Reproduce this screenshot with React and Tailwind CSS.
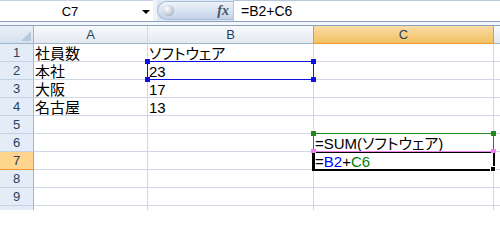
import React from "react";

const F = "font-['Liberation_Sans','Noto_Sans_CJK_JP',sans-serif] [font-feature-settings:'palt']";

const rows = [
  { n: 1, a: "社員数", b: "ソフトウェア", c: null },
  { n: 2, a: "本社", b: "23", c: null },
  { n: 3, a: "大阪", b: "17", c: null },
  { n: 4, a: "名古屋", b: "13", c: null },
  { n: 5, a: "", b: "", c: null },
  { n: 6, a: "", b: "", c: "sum" },
  { n: 7, a: "", b: "", c: "formula" },
  { n: 8, a: "", b: "", c: null },
  { n: 9, a: "", b: "", c: null },
  { n: "", a: "", b: "", c: null },
];

function CellText({ children }) {
  return (
    <div className={`h-[17px] pl-[1px] text-[15px] leading-[20px] whitespace-nowrap text-black ${F}`}>
      {children}
    </div>
  );
}

function RowHead({ n, active }) {
  return active ? (
    <div className="w-[34px] h-[18px] shrink-0 bg-[#ffd58d] border-r border-b border-[#f29536] flex items-center justify-center text-[13px] text-[#27415f] font-['Liberation_Sans',sans-serif]">
      {n}
    </div>
  ) : (
    <div className="w-[34px] h-[18px] shrink-0 bg-[#e4ecf7] border-r border-b border-r-[#9eb6ce] border-b-[#c5d2e3] flex items-center justify-center text-[13px] text-[#27415f] font-['Liberation_Sans',sans-serif]">
      {n}
    </div>
  );
}

export default function App() {
  return (
    <div className="relative w-[500px] h-[210px] overflow-hidden bg-white">
      {/* formula bar */}
      <div className="flex h-[22px] border-b border-[#8ba0bc] bg-[#dfe8f5]">
        <div className="w-[153px] shrink-0 bg-white border-t border-[#c5d2e3] flex items-center relative">
          <div className="w-[140px] text-center text-[13px] text-black font-['Liberation_Sans',sans-serif] leading-none">C7</div>
          <div className="w-0 h-0 border-l-[4px] border-r-[4px] border-t-[4px] border-l-transparent border-r-transparent border-t-black ml-[2px] mt-[1px]" />
        </div>
        <div className="w-[4px] shrink-0 bg-[#eef3fa]" />
        <div className="w-[76px] shrink-0 mt-[1px] mb-[1px] rounded-l-full border border-r-0 border-[#a9bcd6] bg-gradient-to-b from-[#eef3fa] via-[#d9e3f1] to-[#c3d2e8] flex items-center">
          <div className="ml-[5px] w-[11px] h-[11px] rounded-full bg-[radial-gradient(circle_at_35%_35%,#ffffff,#c9ced6_55%,#8d96a3)]" />
          <div className="ml-auto mr-[4px] text-[14px] italic font-bold text-[#4a5566] font-['Liberation_Serif',serif] leading-none">fx</div>
        </div>
        <div className="flex-1 bg-white border-l border-t border-[#b6c5da] flex items-center pl-[7px] text-[14px] text-black font-['Liberation_Sans',sans-serif] leading-none">
          =B2+C6
        </div>
      </div>
      {/* strip */}
      <div className="h-[4px] bg-[#f4f7fb] border-b border-[#8ba0bc]" />
      {/* header row */}
      <div className="flex h-[18px]">
        <div className="w-[34px] shrink-0 bg-gradient-to-b from-[#eaf0f8] to-[#d6e1ef] border-r border-b border-[#9eb6ce] relative">
          <svg className="absolute right-[2px] bottom-[2px]" width="10" height="10" viewBox="0 0 10 10">
            <polygon points="10,0 10,10 0,10" fill="#b7c8de" />
          </svg>
        </div>
        <div className="w-[114px] shrink-0 bg-gradient-to-b from-[#f8f9fb] to-[#e4e9f0] border-r border-b border-r-[#d0d7e5] border-b-[#9eb6ce] flex items-center justify-center text-[13px] text-[#27415f] font-['Liberation_Sans',sans-serif]">A</div>
        <div className="w-[166px] shrink-0 bg-gradient-to-b from-[#f8f9fb] to-[#e4e9f0] border-r border-b border-r-[#d0d7e5] border-b-[#9eb6ce] flex items-center justify-center text-[13px] text-[#27415f] font-['Liberation_Sans',sans-serif]">B</div>
        <div className="w-[181px] shrink-0 -ml-[1px] bg-gradient-to-b from-[#f9dca6] to-[#f1c15f] border border-t-0 border-[#f29536] flex items-center justify-center text-[13px] text-[#27415f] font-['Liberation_Sans',sans-serif]">C</div>
        <div className="flex-1 bg-gradient-to-b from-[#f8f9fb] to-[#e4e9f0] border-b border-[#9eb6ce]" />
      </div>
      {/* data rows */}
      {rows.map((r, i) => (
        <div key={i} className="flex h-[18px]">
          <RowHead n={r.n} active={r.n === 7} />
          <div className="w-[114px] shrink-0 border-r border-b border-[#d0d7e5]">
            <CellText>{r.a}</CellText>
          </div>
          <div className="w-[166px] shrink-0 border-r border-b border-[#d0d7e5]">
            <CellText>{r.b}</CellText>
          </div>
          <div className="w-[180px] shrink-0 border-r border-b border-[#d0d7e5]">
            {r.c === "sum" && <CellText>=SUM(ソフトウェア)</CellText>}
            {r.c === "formula" && (
              <CellText>
                =<span className="text-[#0000ff]">B2</span>+<span className="text-[#008000]">C6</span>
              </CellText>
            )}
          </div>
          <div className="flex-1 border-b border-[#d0d7e5]" />
        </div>
      ))}

      {/* B2 reference highlight */}
      <div className="absolute left-[147px] top-[61px] w-[167px] h-[19px] border border-[#1010e0]" />
      <div className="absolute left-[145px] top-[59px] w-[5px] h-[5px] bg-[#1010e0]" />
      <div className="absolute left-[311px] top-[59px] w-[5px] h-[5px] bg-[#1010e0]" />
      <div className="absolute left-[145px] top-[77px] w-[5px] h-[5px] bg-[#1010e0]" />
      <div className="absolute left-[311px] top-[77px] w-[5px] h-[5px] bg-[#1010e0]" />

      {/* C6 reference highlight */}
      <div className="absolute left-[313px] top-[133px] w-[181px] h-[19px] border border-[#1e8a1e]" />
      <div className="absolute left-[311px] top-[131px] w-[5px] h-[5px] bg-[#1e8a1e]" />
      <div className="absolute left-[491px] top-[131px] w-[5px] h-[5px] bg-[#1e8a1e]" />

      {/* C7 active cell */}
      <div className="absolute left-[312px] top-[151px] w-[183px] h-[20px] border-2 border-l-[3px] border-black" />
      <div className="absolute left-[313px] top-[151px] w-[181px] h-[1px] bg-[#f080f0]" />
      <div className="absolute left-[311px] top-[149px] w-[5px] h-[4px] bg-[#f080f0]" />
      <div className="absolute left-[491px] top-[149px] w-[5px] h-[4px] bg-[#f080f0]" />
      <div className="absolute left-[490px] top-[166px] w-[6px] h-[6px] bg-black border border-white" />
    </div>
  );
}
